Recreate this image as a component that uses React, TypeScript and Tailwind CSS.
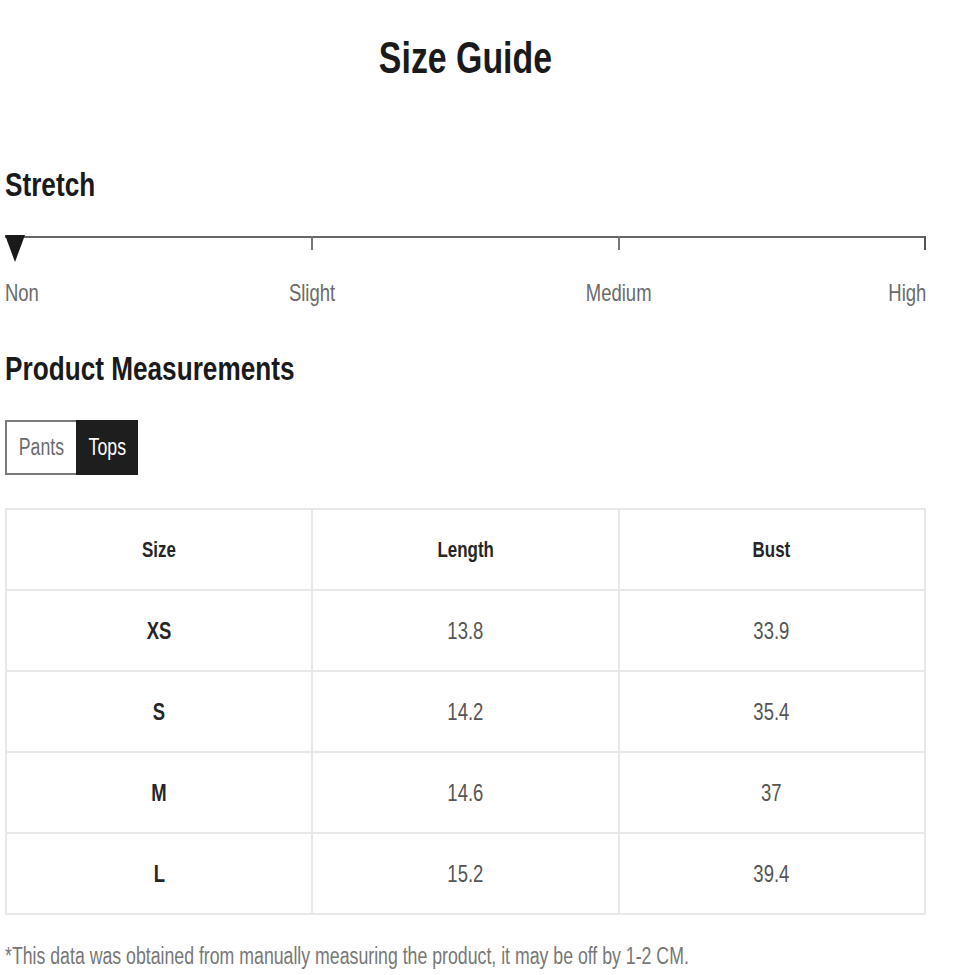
const rows = [
  { size: 'XS', length: '13.8', bust: '33.9' },
  { size: 'S', length: '14.2', bust: '35.4' },
  { size: 'M', length: '14.6', bust: '37' },
  { size: 'L', length: '15.2', bust: '39.4' },
];

const stretchLabels = ['Non', 'Slight', 'Medium', 'High'];

// the reference uses a condensed face; squeeze Liberation Sans to match
function Narrow({
  children,
  origin = 'center',
}: {
  children: React.ReactNode;
  origin?: 'left' | 'center' | 'right';
}) {
  const o =
    origin === 'left'
      ? 'origin-left'
      : origin === 'right'
        ? 'origin-right'
        : 'origin-center';
  return (
    <span className={`inline-block scale-x-[0.77] whitespace-nowrap ${o}`}>
      {children}
    </span>
  );
}

const cell =
  'flex h-[81px] items-center justify-center border-b-2 border-r-2 border-[#e8e8e8]';

export default function App() {
  return (
    <div className="h-[975px] w-[970px] bg-white pl-[5px] pr-[44px] font-['Liberation_Sans',Arial,sans-serif]">
      <h1 className="flex h-[116px] items-center justify-center text-[44px] font-bold leading-none text-[#1a1a1a]">
        <Narrow>Size Guide</Narrow>
      </h1>

      <h2 className="mt-[48px] h-[40px] text-[34px] font-bold leading-[40px] text-[#1a1a1a]">
        <Narrow origin="left">Stretch</Narrow>
      </h2>

      <div className="relative mt-[32px] h-[28px]">
        <div className="h-[2px] w-full bg-[#666]" />
        <div className="absolute left-[306px] top-0 h-[14px] w-[2px] bg-[#777]" />
        <div className="absolute left-[613px] top-0 h-[14px] w-[2px] bg-[#777]" />
        <div className="absolute right-0 top-0 h-[14px] w-[2px] bg-[#555]" />
        <svg
          className="absolute left-0 top-[-1px]"
          width="20"
          height="27"
          viewBox="0 0 20 27"
        >
          <polygon points="0,0 20,0 10,27" fill="#1a1a1a" />
        </svg>
      </div>

      <div className="mt-[14px] flex h-[30px] justify-between text-[24px] leading-[30px] text-[#6b6b6b]">
        {stretchLabels.map((label, i) => {
          const first = i === 0;
          const last = i === stretchLabels.length - 1;
          return (
            <div
              key={label}
              className={
                first
                  ? 'flex w-0 justify-start'
                  : last
                    ? 'flex w-0 justify-end'
                    : 'flex w-0 justify-center'
              }
            >
              <Narrow origin={first ? 'left' : last ? 'right' : 'center'}>
                {label}
              </Narrow>
            </div>
          );
        })}
      </div>

      <h2 className="mt-[40px] h-[40px] text-[34px] font-bold leading-[40px] text-[#1a1a1a]">
        <Narrow origin="left">Product Measurements</Narrow>
      </h2>

      <div className="mt-[32px] flex h-[55px] w-[133px] text-[23px]">
        <div className="flex w-[71px] items-center justify-center border-2 border-r-0 border-[#7a7a7a] text-[#6b6b6b]">
          <Narrow>Pants</Narrow>
        </div>
        <div className="flex flex-1 items-center justify-center bg-[#1e1e1e] text-white">
          <Narrow>Tops</Narrow>
        </div>
      </div>

      <div className="mt-[33px] grid grid-cols-3 border-l-2 border-t-2 border-[#e8e8e8] text-[24px]">
        {['Size', 'Length', 'Bust'].map((h) => (
          <div key={h} className={`${cell} text-[22px] font-bold text-[#262626]`}>
            <Narrow>{h}</Narrow>
          </div>
        ))}
        {rows.map((row) => (
          <div key={row.size} className="contents">
            <div className={`${cell} font-bold text-[#262626]`}>
              <Narrow>{row.size}</Narrow>
            </div>
            <div className={`${cell} text-[#555]`}>
              <Narrow>{row.length}</Narrow>
            </div>
            <div className={`${cell} text-[#555]`}>
              <Narrow>{row.bust}</Narrow>
            </div>
          </div>
        ))}
      </div>

      <p className="mt-[26px] h-[30px] text-[23px] leading-[30px] text-[#777]">
        <Narrow origin="left">
          *This data was obtained from manually measuring the product, it may
          be off by 1-2 CM.
        </Narrow>
      </p>
    </div>
  );
}
